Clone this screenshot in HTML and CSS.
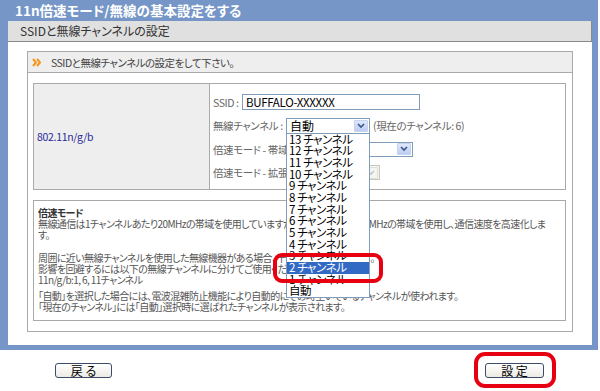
FILE: index.html
```
<!DOCTYPE html>
<html lang="ja">
<head>
<meta charset="utf-8">
<link rel="stylesheet" href="styles.css">
</head>
<body>
<div class="frame">
  <div class="title">11n倍速モード/無線の基本設定をする</div>
  <div class="sec-head">SSIDと無線チャンネルの設定</div>
  <div class="content">
    <div class="panel">
      <div class="panel-head">
        <svg class="chev" width="10" height="9" viewBox="0 0 10 9"><path d="M1 1 L4 4.5 L1 8 M5 1 L8 4.5 L5 8" fill="none" stroke="#f7941d" stroke-width="2"/></svg>
        <span>SSIDと無線チャンネルの設定をして下さい。</span>
      </div>
      <div class="panel-body">
        <div class="tbl">
          <div class="cell-l">802.11n/g/b</div>
          <div class="cell-r">
            <div class="row"><span class="lbl w1">SSID :</span><div class="input">BUFFALO-XXXXXX</div></div>
            <div class="row"><span class="lbl w2">無線チャンネル :</span>
              <div class="select s1"><span class="val">自動</span><span class="arrow"><svg width="8" height="6" viewBox="0 0 8 6"><path d="M1 1 L4 4 L7 1" fill="none" stroke="#3d5488" stroke-width="1.6"/></svg></span>
                <div class="list">
                  <div class="item">13 チャンネル</div>
                  <div class="item">12 チャンネル</div>
                  <div class="item">11 チャンネル</div>
                  <div class="item">10 チャンネル</div>
                  <div class="item">9 チャンネル</div>
                  <div class="item">8 チャンネル</div>
                  <div class="item">7 チャンネル</div>
                  <div class="item">6 チャンネル</div>
                  <div class="item">5 チャンネル</div>
                  <div class="item">4 チャンネル</div>
                  <div class="item">3 チャンネル</div>
                  <div class="item sel">2 チャンネル<span class="ring ring-item"></span></div>
                  <div class="item">1 チャンネル</div>
                  <div class="item">自動</div>
                </div>
              </div>
              <span class="cur">(現在のチャンネル: 6)</span>
            </div>
            <div class="row"><span class="lbl w3">倍速モード - 帯域 :</span>
              <div class="select s2"><span class="val">20 MHz</span><span class="arrow"><svg width="8" height="6" viewBox="0 0 8 6"><path d="M1 1 L4 4 L7 1" fill="none" stroke="#3d5488" stroke-width="1.6"/></svg></span></div>
            </div>
            <div class="row"><span class="lbl w3">倍速モード - 拡張 :</span>
              <div class="select s3 disabled"><span class="val"></span><span class="arrow"><svg width="8" height="6" viewBox="0 0 8 6"><path d="M1 1 L4 4 L7 1" fill="none" stroke="#c8c8c8" stroke-width="1.6"/></svg></span></div>
            </div>
          </div>
        </div>
        <div class="desc">
          <p class="d-title">倍速モード</p>
          <p>無線通信は1チャンネルあたり20MHzの帯域を使用していますが、倍速モードでは40MHzの帯域を使用し、通信速度を高速化しま<br>す。</p>
          <p class="gap-l">周囲に近い無線チャンネルを使用した無線機器がある場合、干渉することがあります。<br>影響を回避するには以下の無線チャンネルに分けてご使用ください。<br>11n/g/b:1, 6, 11チャンネル</p>
          <p class="gap-s">「自動」を選択した場合には、電波混雑防止機能により自動的にその時空いているチャンネルが使われます。<br>「現在のチャンネル」には「自動」選択時に選ばれたチャンネルが表示されます。</p>
        </div>
      </div>
    </div>
  </div>
</div>
<div class="btns">
  <div class="btn back">戻 る</div>
  <div class="btn set">設 定<span class="ring ring-btn"></span></div>
</div>
</body>
</html>
```
FILE: styles.css
```
* { box-sizing: border-box; }
body {
  margin: 0;
  width: 600px;
  height: 391px;
  overflow: hidden;
  background: #fff;
  font-family: "Noto Sans CJK JP", "Noto Sans", sans-serif;
  font-feature-settings: "palt";
  color: #333;
}
.frame {
  width: 598px;
  background: #7596c6;
  padding: 0 6px 5px 8px;
}
.title {
  height: 21px;
  line-height: 21px;
  color: #fff;
  font-size: 13.5px;
  font-weight: bold;
  padding-left: 7px;
  white-space: nowrap;
}
.sec-head {
  height: 21px;
  background: #e0e0e0;
  border-bottom: 1px solid #8a8a8a;
  border-right: 1px solid #8a8a8a;
  font-size: 12px;
  line-height: 20px;
  color: #333;
  padding-left: 12px;
}
.content {
  background: #fff;
  padding: 9px 19px 13px 19px;
}
.panel {
  border: 1px solid #aaa;
}
.panel-head {
  height: 21px;
  background: #eee;
  border-bottom: 1px solid #aaa;
  display: flex;
  align-items: center;
  padding-left: 4px;
  font-size: 10.5px;
  letter-spacing: -0.5px;
  color: #444;
}
.chev { margin-right: 9px; }
.panel-body {
  padding: 10px 6px 10px 5px;
}
.tbl {
  display: flex;
  height: 107px;
  border: 1px solid #aaa;
}
.cell-l {
  width: 176px;
  background: #eee;
  border-right: 1px solid #aaa;
  display: flex;
  align-items: center;
  padding-left: 3px;
  color: #2a2a9a;
  font-size: 10.5px;
  letter-spacing: -0.3px;
}
.cell-r {
  flex: 1;
  padding: 10px 4px 0 3px;
  display: flex;
  flex-direction: column;
  gap: 7.5px;
}
.row {
  display: flex;
  align-items: center;
  height: 16px;
  font-size: 10.5px;
  letter-spacing: -0.4px;
  color: #666;
}
.lbl { white-space: nowrap; flex: none; }
.w1 { width: 29px; }
.w2 { width: 73px; }
.w3 { width: 87px; }
.input {
  width: 178px;
  height: 16px;
  border: 1px solid #7f9db9;
  font-size: 11.5px;
  letter-spacing: -0.3px;
  line-height: 14px;
  color: #000;
  padding-left: 3px;
}
.select {
  position: relative;
  height: 16px;
  border: 1px solid #7f9db9;
  background: #fff;
  display: flex;
  align-items: center;
  font-size: 12px;
  letter-spacing: 0;
  color: #000;
  padding-left: 3px;
}
.select .val { flex: 1; white-space: nowrap; overflow: hidden; }
.arrow {
  width: 14px;
  height: 12px;
  margin-right: 1px;
  background: linear-gradient(#dfe8fb, #bccdf4);
  border: 1px solid #c6d3ee;
  border-radius: 1px;
  display: flex;
  align-items: center;
  justify-content: center;
}
.s1 { width: 84px; }
.s2 { width: 113px; height: 15px; }
.s3 { width: 80px; height: 15px; }
.disabled { border-color: #c9c7ba; background: #f4f4f0; }
.disabled .arrow { background: #f4f4f0; border-color: #e0e0dc; }
.cur { margin-left: 3px; white-space: nowrap; }
.list {
  position: absolute;
  top: 100%;
  left: -1px;
  width: 84px;
  background: #fff;
  border: 1px solid #7f9db9;
  z-index: 10;
}
.item {
  position: relative;
  height: 11.7px;
  line-height: 11.7px;
  font-size: 11.5px;
  letter-spacing: -0.4px;
  padding-left: 2px;
  color: #000;
  white-space: nowrap;
}
.item.sel { background: #316ac5; color: #fff; }
.ring {
  position: absolute;
  border: 4px solid #e60012;
  border-radius: 9px;
  z-index: 20;
}
.ring-item { left: -14px; right: -14px; top: -9px; bottom: -9px; }
.desc {
  margin-top: 10px;
  border: 1px solid #aaa;
  padding: 6px 4px 8px 4px;
  font-size: 10px;
  letter-spacing: -0.6px;
  line-height: 11px;
  color: #555;
  white-space: nowrap;
}
.desc p { margin: 0; }
.d-title { font-weight: bold; color: #333; }
.gap-l { margin-top: 12px !important; }
.gap-s { margin-top: 5px !important; }
.btns {
  display: flex;
  justify-content: space-between;
  padding: 13px 56px 0 55px;
}
.btn {
  position: relative;
  height: 15px;
  border: 1px solid #3c4c68;
  border-radius: 3px;
  background: linear-gradient(#ffffff, #ecebe4);
  font-size: 12px;
  line-height: 13px;
  color: #000;
  display: flex;
  align-items: center;
  justify-content: center;
  white-space: pre;
}
.back { width: 57px; }
.set { width: 59px; }
.ring-btn { left: -12px; right: -13px; top: -12px; bottom: -11px; border-radius: 11px; }
```
